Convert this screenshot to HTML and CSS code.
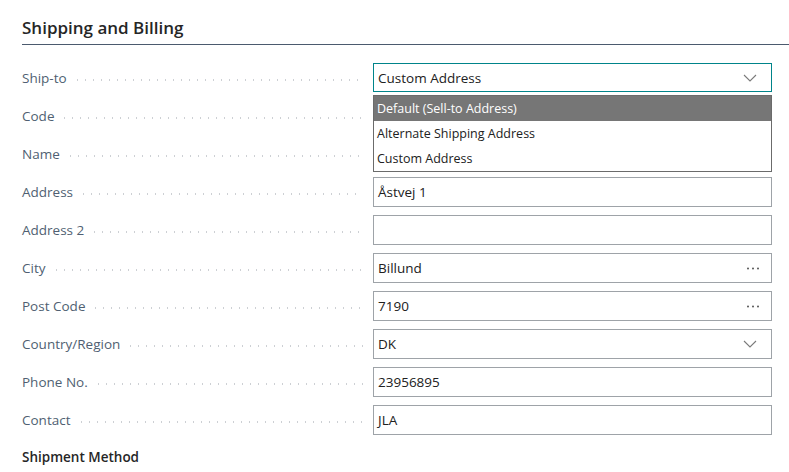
FILE: index.html
```html
<!DOCTYPE html>
<html>
<head>
<meta charset="utf-8">
<link rel="stylesheet" href="styles.css">
</head>
<body>
<div class="section">
  <h2 class="title">Shipping and Billing</h2>
  <div class="form">
    <div class="row">
      <div class="label"><span>Ship-to</span><i class="leader"></i></div>
      <div class="field-wrap">
        <div class="field focus"><span>Custom Address</span>
          <svg class="chev" width="14" height="8" viewBox="0 0 14 8"><polyline points="1,1 7,7 13,1" fill="none" stroke="#7a7a7a" stroke-width="1.1"/></svg>
        </div>
        <div class="menu">
          <div class="opt sel">Default (Sell-to Address)</div>
          <div class="opt">Alternate Shipping Address</div>
          <div class="opt">Custom Address</div>
        </div>
      </div>
    </div>
    <div class="row">
      <div class="label"><span>Code</span><i class="leader"></i></div>
      <div class="field"></div>
    </div>
    <div class="row">
      <div class="label"><span>Name</span><i class="leader"></i></div>
      <div class="field"></div>
    </div>
    <div class="row">
      <div class="label"><span>Address</span><i class="leader"></i></div>
      <div class="field"><span>Åstvej 1</span></div>
    </div>
    <div class="row">
      <div class="label"><span>Address 2</span><i class="leader"></i></div>
      <div class="field"></div>
    </div>
    <div class="row">
      <div class="label"><span>City</span><i class="leader"></i></div>
      <div class="field"><span>Billund</span>
        <svg class="dots" width="12" height="3" viewBox="0 0 12 3"><circle cx="1" cy="1.5" r="1" fill="#555"/><circle cx="6" cy="1.5" r="1" fill="#555"/><circle cx="11" cy="1.5" r="1" fill="#555"/></svg>
      </div>
    </div>
    <div class="row">
      <div class="label"><span>Post Code</span><i class="leader"></i></div>
      <div class="field"><span>7190</span>
        <svg class="dots" width="12" height="3" viewBox="0 0 12 3"><circle cx="1" cy="1.5" r="1" fill="#555"/><circle cx="6" cy="1.5" r="1" fill="#555"/><circle cx="11" cy="1.5" r="1" fill="#555"/></svg>
      </div>
    </div>
    <div class="row">
      <div class="label"><span>Country/Region</span><i class="leader"></i></div>
      <div class="field"><span>DK</span>
        <svg class="chev" width="14" height="8" viewBox="0 0 14 8"><polyline points="1,1 7,7 13,1" fill="none" stroke="#7a7a7a" stroke-width="1.1"/></svg>
      </div>
    </div>
    <div class="row">
      <div class="label"><span>Phone No.</span><i class="leader"></i></div>
      <div class="field"><span>23956895</span></div>
    </div>
    <div class="row">
      <div class="label"><span>Contact</span><i class="leader"></i></div>
      <div class="field"><span>JLA</span></div>
    </div>
  </div>
  <h3 class="subtitle">Shipment Method</h3>
</div>
</body>
</html>
```
FILE: styles.css
```css
html, body {
  margin: 0;
  padding: 0;
  background: #ffffff;
}
body {
  font-family: "Segoe UI", "Open Sans", "Noto Sans", sans-serif;
  color: #212121;
}
.section {
  padding-left: 22px;
}
.title {
  margin: 0;
  padding: 16px 0 4px 0;
  font-size: 17px;
  line-height: 24px;
  font-weight: 600;
  color: #262626;
  border-bottom: 1px solid #4b5a6e;
}
.form {
  display: flex;
  flex-direction: column;
  gap: 8px;
  margin-top: 18px;
  width: 750px;
}
.row {
  display: grid;
  grid-template-columns: 351px 399px;
  height: 30px;
}
.label {
  display: flex;
  align-items: center;
  padding-right: 10px;
  font-size: 13.5px;
  color: #505f72;
}
.leader {
  flex: 1;
  height: 2px;
  margin-left: 10px;
  margin-top: 3px;
  background-image: linear-gradient(to right, #cdd0d4 0, #cdd0d4 1.5px, transparent 1.5px, transparent 8px);
  background-size: 8px 1.5px;
  background-repeat: repeat-x;
}
.field-wrap {
  position: relative;
}
.field {
  box-sizing: border-box;
  height: 30px;
  border: 1px solid #9ea3a8;
  display: flex;
  align-items: center;
  justify-content: space-between;
  padding: 0 12px 0 4px;
  font-size: 13.5px;
  color: #212121;
}
.field.focus {
  border-color: #00848a;
  height: 29px;
}
.chev {
  margin-right: 2px;
}
.menu {
  position: absolute;
  top: 32px;
  left: 0;
  right: 0;
  box-sizing: border-box;
  border: 1px solid #6b6b6b;
  background: #ffffff;
  z-index: 2;
}
.opt {
  height: 25px;
  line-height: 25px;
  padding-left: 3px;
  font-size: 12.5px;
  color: #212121;
}
.opt.sel {
  background: #767676;
  color: #ffffff;
}
.subtitle {
  margin: 13px 0 0 0;
  font-size: 13.5px;
  font-weight: 600;
  color: #262626;
  line-height: 18px;
}
```
